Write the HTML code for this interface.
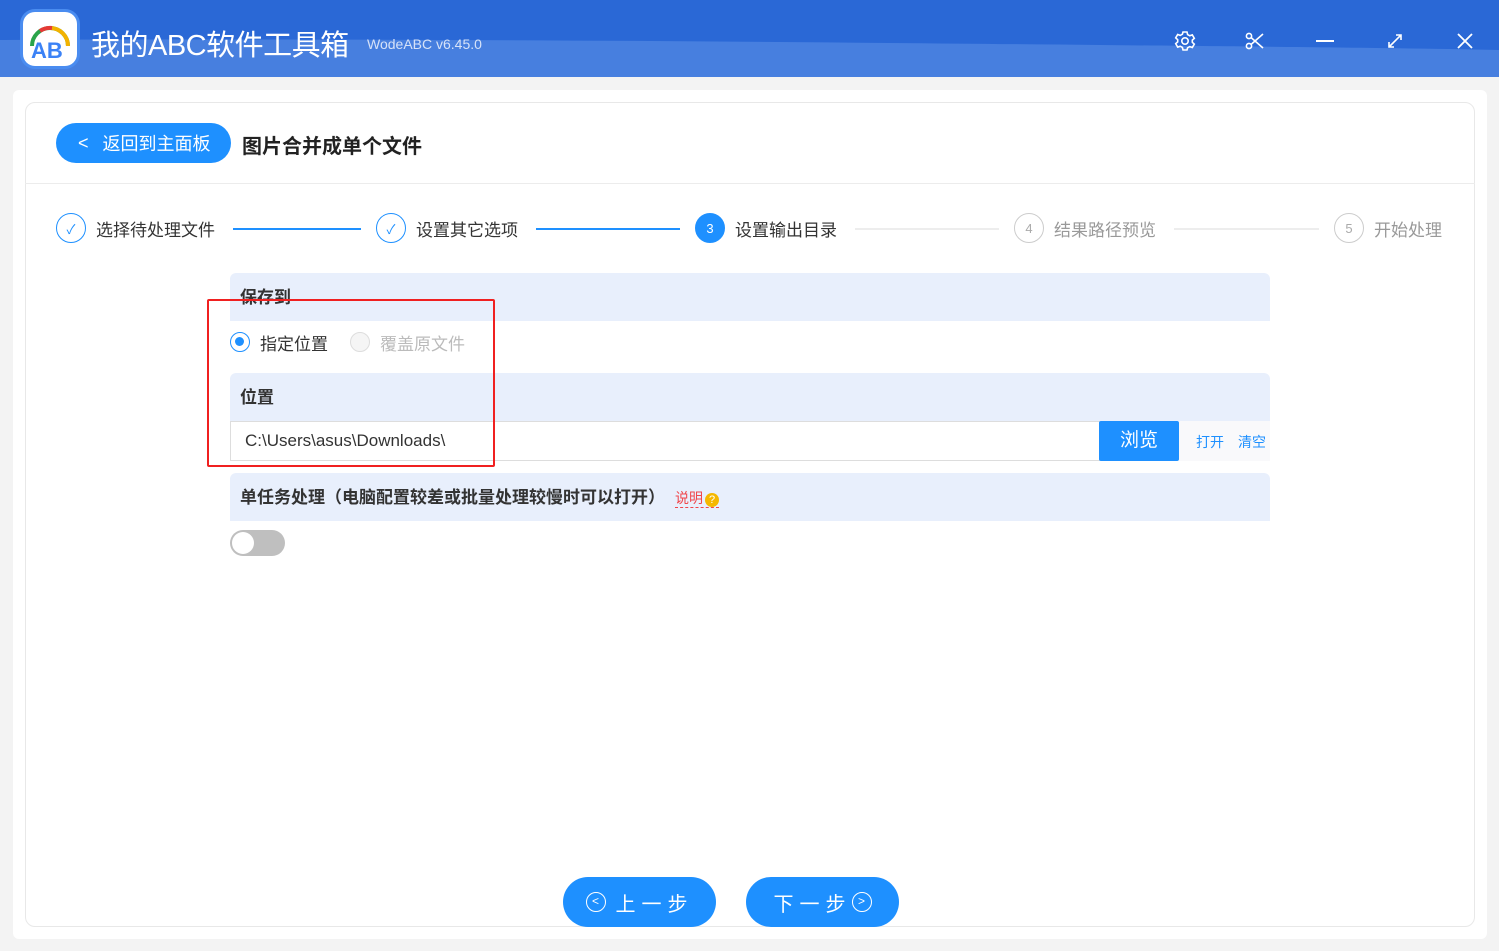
<!DOCTYPE html>
<html><head><meta charset="utf-8"><style>
*{margin:0;padding:0;box-sizing:border-box}
body{width:1499px;height:951px;overflow:hidden;background:#f3f3f3;font-family:"Liberation Sans","Noto Sans CJK SC",sans-serif;position:relative}
.abs{position:absolute}
.title{left:0;top:0;width:1499px;height:77px;background:#2a68d6;overflow:hidden}
.step{position:absolute;top:213px;display:flex;align-items:center;font-size:17px;color:#333}
.circ{width:30px;height:30px;border-radius:50%;border:1.5px solid #1e90ff;display:flex;align-items:center;justify-content:center;margin-right:10px;font-size:13px}
.gray .circ{border-color:#ccc;color:#aaa}
.gray{color:#999}
.line{position:absolute;top:228px;height:2px}
.panel{position:absolute;left:230px;width:1040px;background:#e8effc;border-radius:6px 6px 0 0;font-size:17px;font-weight:bold;color:#333;padding-left:10px}
.btn{position:absolute;top:877px;width:153px;height:50px;border-radius:25px;background:#1e90ff;color:#fff;font-size:20px;display:flex;align-items:center;justify-content:center;letter-spacing:6px}
</style></head><body>
<div class="abs title">
<svg width="1499" height="77" style="position:absolute;left:0;top:0"><path d="M0 40 C400 38 800 42 1100 45 C1300 47 1400 48 1499 50 L1499 77 L0 77Z" fill="#477fdf"/></svg>
<div class="abs" style="left:20px;top:9px;width:60px;height:60px;border-radius:15px;background:#4a8cf0;padding:3px"><div style="width:54px;height:54px;border-radius:12px;background:#fff;position:relative">
<svg width="54" height="54" viewBox="0 0 54 54"><path d="M9 34 A18 18 0 0 1 45 34" stroke="#2aa44a" stroke-width="4" fill="none"/><path d="M27 16 A18 18 0 0 1 45 34" stroke="#f3b200" stroke-width="4" fill="none"/><path d="M17 19 A18 18 0 0 1 29 16" stroke="#e53935" stroke-width="4" fill="none"/><text x="8" y="46" font-size="22" font-family="Liberation Sans" font-weight="bold" fill="#3b82f6">AB</text></svg></div></div>
<div class="abs" style="left:91px;top:22px;color:#fff;font-size:29px;letter-spacing:-0.5px">我的ABC软件工具箱</div>
<div class="abs" style="left:367px;top:36px;color:#d6e2f8;font-size:14px">WodeABC v6.45.0</div>
<svg class="abs" style="left:1174px;top:30px" width="22" height="22" viewBox="0 0 22 22" fill="none" stroke="#fff" stroke-width="1.6"><path d="M9 2h4l.6 2.6 2.2 1.2 2.5-.9 2 3.4-2 1.8v2.2l2 1.8-2 3.4-2.5-.9-2.2 1.2L13 20H9l-.6-2.6-2.2-1.2-2.5.9-2-3.4 2-1.8V9.7l-2-1.8 2-3.4 2.5.9 2.2-1.2z"/><circle cx="11" cy="11" r="3.2"/></svg>
<svg class="abs" style="left:1245px;top:31px" width="20" height="20" viewBox="0 0 20 20" fill="none" stroke="#fff" stroke-width="1.6"><circle cx="4" cy="5" r="2.6"/><circle cx="4" cy="15" r="2.6"/><path d="M6 6.5 18 17M6 13.5 18 3"/></svg>
<div class="abs" style="left:1316px;top:40px;width:18px;height:2px;background:#fff"></div>
<svg class="abs" style="left:1386px;top:32px" width="18" height="18" viewBox="0 0 18 18" fill="none" stroke="#fff" stroke-width="1.6"><path d="M3 15 15 3M10 3h5v5M3 10v5h5" /></svg>
<svg class="abs" style="left:1456px;top:32px" width="18" height="18" viewBox="0 0 18 18" stroke="#fff" stroke-width="1.8"><path d="M2 2 16 16M16 2 2 16"/></svg>
</div>
<div class="abs" style="left:13px;top:90px;width:1474px;height:849px;background:#fff;border-radius:6px"></div>
<div class="abs" style="left:25px;top:102px;width:1450px;height:825px;border:1px solid #e8e8e8;border-radius:10px"></div>
<div class="abs" style="left:25px;top:183px;width:1450px;height:1px;background:#ececec"></div>
<div class="abs" style="left:56px;top:123px;width:175px;height:40px;border-radius:20px;background:#1e90ff;color:#fff;font-size:18px;display:flex;align-items:center;padding-left:22px"><span style="font-size:18px;margin-right:14px">&lt;</span>返回到主面板</div>
<div class="abs" style="left:242px;top:130px;font-size:20px;font-weight:bold;color:#222">图片合并成单个文件</div>
<div class="step" style="left:56px"><div class="circ" style="color:#1e90ff">✓</div>选择待处理文件</div>
<div class="line" style="left:233px;width:128px;background:#1e90ff"></div>
<div class="step" style="left:376px"><div class="circ" style="color:#1e90ff">✓</div>设置其它选项</div>
<div class="line" style="left:536px;width:144px;background:#1e90ff"></div>
<div class="step" style="left:695px"><div class="circ" style="background:#1e90ff;color:#fff">3</div>设置输出目录</div>
<div class="line" style="left:855px;width:144px;background:#ededed"></div>
<div class="step gray" style="left:1014px"><div class="circ">4</div>结果路径预览</div>
<div class="line" style="left:1174px;width:145px;background:#ededed"></div>
<div class="step gray" style="left:1334px"><div class="circ">5</div>开始处理</div>
<div class="panel" style="top:273px;height:48px;line-height:50px">保存到</div>
<div class="abs" style="left:230px;top:332px;width:20px;height:20px;border-radius:50%;border:1.5px solid #1e90ff"><div style="margin:4px;width:9px;height:9px;border-radius:50%;background:#1e90ff"></div></div>
<div class="abs" style="left:260px;top:330px;font-size:17px;color:#333">指定位置</div>
<div class="abs" style="left:350px;top:332px;width:20px;height:20px;border-radius:50%;border:1.5px solid #ddd;background:#f5f5f5"></div>
<div class="abs" style="left:380px;top:330px;font-size:17px;color:#bbb">覆盖原文件</div>
<div class="panel" style="top:373px;height:48px;line-height:50px">位置</div>
<div class="abs" style="left:230px;top:421px;width:870px;height:40px;border:1px solid #ddd;background:#fff;font-size:17px;color:#333;padding:9px 0 0 14px">C:\Users\asus\Downloads\</div>
<div class="abs" style="left:1099px;top:421px;width:80px;height:40px;background:#1e90ff;color:#fff;font-size:19px;text-align:center;line-height:40px;border-radius:2px">浏览</div>
<div class="abs" style="left:1179px;top:421px;width:91px;height:40px;background:#f9f9fb"></div>
<div class="abs" style="left:1196px;top:432px;font-size:14px;color:#1e90ff">打开</div>
<div class="abs" style="left:1238px;top:432px;font-size:14px;color:#1e90ff">清空</div>
<div class="panel" style="top:473px;height:48px;line-height:50px">单任务处理（电脑配置较差或批量处理较慢时可以打开）<span style="font-weight:normal;font-size:14px;color:#f0464b;border-bottom:1px dashed #f0464b;margin-left:10px;line-height:18px;display:inline-block">说明<span style="display:inline-block;width:14px;height:14px;border-radius:50%;background:#f5b800;color:#fff;font-size:11px;line-height:14px;text-align:center;margin-left:2px">?</span></span></div>
<div class="abs" style="left:230px;top:530px;width:55px;height:26px;border-radius:13px;background:#bfbfbf"><div style="margin:2px;width:22px;height:22px;border-radius:50%;background:#fff"></div></div>
<div class="abs" style="left:207px;top:299px;width:288px;height:168px;border:2px solid #f02020;border-radius:2px"></div>
<div class="btn" style="left:563px"><span style="display:inline-block;width:20px;height:20px;border:1.6px solid #fff;border-radius:50%;font-size:12px;line-height:17px;text-align:center;letter-spacing:0;margin-right:10px">&lt;</span>上一步</div>
<div class="btn" style="left:746px">下一步<span style="display:inline-block;width:20px;height:20px;border:1.6px solid #fff;border-radius:50%;font-size:12px;line-height:17px;text-align:center;letter-spacing:0">&gt;</span></div>
</body></html>
